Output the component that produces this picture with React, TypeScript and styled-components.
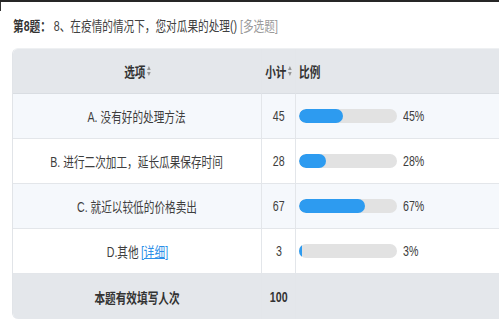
import React from 'react';
import styled, { createGlobalStyle } from 'styled-components';

interface RowProps {
  striped?: boolean;
}

interface CellProps {
  align?: 'left' | 'center';
  last?: boolean;
}

interface SqueezeProps {
  origin?: 'left' | 'center';
}

const GlobalStyle = createGlobalStyle`
  html, body {
    margin: 0;
    padding: 0;
    background: #ffffff;
    overflow: hidden;
  }
  body {
    font-family: "Liberation Sans", "Noto Sans CJK SC", sans-serif;
    color: #3d3d3d;
  }
`;

const Page = styled.div`
  position: relative;
  width: 499px;
  height: 333px;
  border-top: 2px solid #262626;
  box-sizing: border-box;
  overflow: hidden;

  &::before {
    content: '';
    position: absolute;
    left: 0;
    top: 0;
    width: 1px;
    height: 9px;
    background: #333333;
  }
`;

// the source renders a narrow CJK face, so text is squeezed horizontally
const Squeeze = styled.span<SqueezeProps>`
  display: inline-block;
  white-space: nowrap;
  transform: scaleX(0.76);
  transform-origin: ${(props) => (props.origin === 'left' ? 'left center' : 'center center')};
`;

const Title = styled.div`
  display: flex;
  align-items: center;
  height: 46px;
  padding-left: 13px;
  font-size: 14px;
  color: #404040;
`;

const TitleNo = styled.span`
  font-weight: bold;
  color: #333333;
`;

const TitleTag = styled.span`
  color: #9a9a9a;
`;

const Table = styled.div`
  display: grid;
  grid-template-columns: 249px 34px 1fr;
  width: 530px;
  margin-left: 12px;
  border-radius: 6px 0 0 6px;
  border-left: 1px solid #e1e4e8;
  border-top: 1px solid #eef0f2;
  overflow: hidden;
  font-size: 14px;
`;

const Row = styled.div<RowProps>`
  display: contents;

  & > div {
    background: ${(props) => (props.striped ? '#f5f8fc' : '#ffffff')};
  }
`;

const Cell = styled.div<CellProps>`
  display: flex;
  align-items: center;
  justify-content: ${(props) => (props.align === 'left' ? 'flex-start' : 'center')};
  height: 45px;
  box-sizing: border-box;
  padding: 0 3px;
  border-bottom: 1px solid #e3e6ea;
  border-right: ${(props) => (props.last ? 'none' : '1px solid #e3e6ea')};
  white-space: nowrap;
`;

const HeadRow = styled.div`
  display: contents;

  & > div {
    background: #e4e7eb;
    font-weight: bold;
    color: #333333;
    border-bottom-color: #d9dde2;
  }
`;

const FootRow = styled.div`
  display: contents;

  & > div {
    background: #e4e7eb;
    font-weight: bold;
    color: #333333;
    border-bottom: none;
  }
`;

const SortIcon = styled.svg`
  width: 5px;
  height: 10px;
  margin-left: 2px;
  flex: none;
`;

const HeadLabel = styled.span`
  display: inline-flex;
  align-items: center;
`;

const Bar = styled.div`
  width: 98px;
  height: 14px;
  border-radius: 7px;
  background: #e2e2e2;
  overflow: hidden;
  flex: none;
`;

const Fill = styled.div`
  height: 100%;
  border-radius: 7px;
  background: #2d9bf0;
`;

const Percent = styled.span`
  margin-left: 6px;
  color: #3d3d3d;
`;

const Detail = styled.a`
  color: #2d8fe8;
  text-decoration: underline;
  margin-left: 3px;
  cursor: pointer;
`;

const Sort = () => (
  <SortIcon viewBox="0 0 5 10">
    <path d="M2.5 0 L5 4 L0 4 Z" fill="#959595" />
    <path d="M0 6 L5 6 L2.5 10 Z" fill="#959595" />
  </SortIcon>
);

const rows = [
  { label: 'A. 没有好的处理方法', count: 45, pct: 45 },
  { label: 'B. 进行二次加工，延长瓜果保存时间', count: 28, pct: 28 },
  { label: 'C. 就近以较低的价格卖出', count: 67, pct: 67 },
  { label: 'D.其他', count: 3, pct: 3, detail: true },
];

const App = () => {
  return (
    <Page>
      <GlobalStyle />
      <Title>
        <Squeeze origin="left">
          <TitleNo>第8题：</TitleNo> 8、在疫情的情况下，您对瓜果的处理(){' '}
          <TitleTag>[多选题]</TitleTag>
        </Squeeze>
      </Title>
      <Table>
        <HeadRow>
          <Cell>
            <Squeeze>
              <HeadLabel>
                选项
                <Sort />
              </HeadLabel>
            </Squeeze>
          </Cell>
          <Cell>
            <Squeeze>
              <HeadLabel>
                小计
                <Sort />
              </HeadLabel>
            </Squeeze>
          </Cell>
          <Cell align="left" last>
            <Squeeze origin="left">比例</Squeeze>
          </Cell>
        </HeadRow>
        {rows.map((row, i) => (
          <Row key={row.label} striped={i % 2 === 0 && i < 3}>
            <Cell>
              <Squeeze>
                {row.label}
                {row.detail && <Detail>[详细]</Detail>}
              </Squeeze>
            </Cell>
            <Cell>
              <Squeeze>{row.count}</Squeeze>
            </Cell>
            <Cell align="left" last>
              <Bar>
                <Fill style={{ width: `${row.pct}%` }} />
              </Bar>
              <Percent>
                <Squeeze origin="left">{row.pct}%</Squeeze>
              </Percent>
            </Cell>
          </Row>
        ))}
        <FootRow>
          <Cell>
            <Squeeze>本题有效填写人次</Squeeze>
          </Cell>
          <Cell>
            <Squeeze>100</Squeeze>
          </Cell>
          <Cell last />
        </FootRow>
      </Table>
    </Page>
  );
};

export default App;
